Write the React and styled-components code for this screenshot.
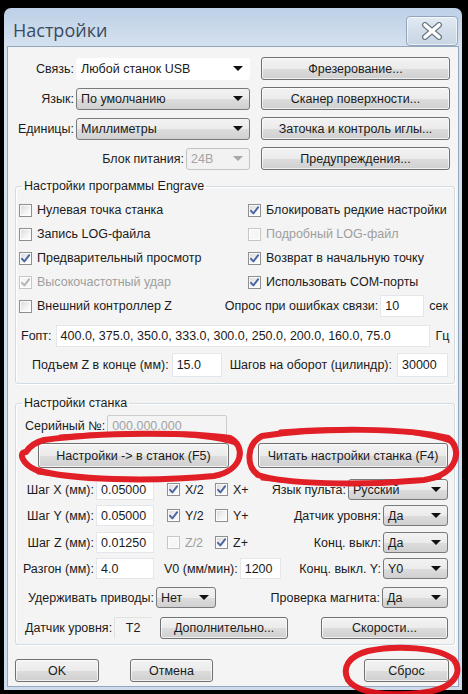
import React from "react";
import styled, { createGlobalStyle } from "styled-components";

const GlobalStyle = createGlobalStyle`
  html, body {
    margin: 0;
    padding: 0;
    background: #000;
  }
  body {
    font-family: "Liberation Sans", Arial, sans-serif;
    font-size: 12.5px;
    color: #1b1b1b;
  }
  * {
    box-sizing: border-box;
  }
`;

const Screen = styled.div`
  position: relative;
  width: 468px;
  height: 694px;
  overflow: hidden;
  background: #000;
  padding: 8px 6px 0 4px;
`;

const Window = styled.div`
  height: 682px;
  border-radius: 7px 7px 0 0;
  background: linear-gradient(#bdd0e7, #d4e1ef 38px, #cddbea);
  padding: 0 3px 3px 3px;
  display: flex;
  flex-direction: column;
`;

const TitleBar = styled.div`
  height: 38px;
  display: flex;
  align-items: center;
  justify-content: space-between;
  padding: 0 0 0 6px;
`;

const Title = styled.div`
  font-family: "Open Sans", "Noto Sans", sans-serif;
  font-size: 18px;
  color: #3b4b5e;
  padding-top: 6px;
`;

const CloseButton = styled.div`
  width: 52px;
  height: 30px;
  margin-top: 8px;
  margin-right: 1px;
  border: 1px solid #94a6bd;
  border-radius: 4px;
  background: linear-gradient(#e3ebf4, #d3deea 50%, #c8d5e4);
  box-shadow: inset 0 0 0 1px rgba(255, 255, 255, 0.6);
  display: flex;
  align-items: center;
  justify-content: center;
`;

const Client = styled.div`
  flex: 1;
  background: #f4f4f4;
  border: 1px solid #94a7bf;
  display: flex;
  flex-direction: column;
`;

const TopSection = styled.div`
  display: grid;
  grid-template-columns: 1fr 189px;
  column-gap: 11px;
  row-gap: 7px;
  padding: 10px 8px 0 6px;
`;

const FieldRow = styled.div`
  display: flex;
  align-items: center;
  justify-content: flex-end;
  gap: 2px;
  height: 23px;
`;

const Label = styled.span`
  white-space: nowrap;
  color: ${(p) => (p.$disabled ? "#9a9a9a" : "#1b1b1b")};
  width: ${(p) => (p.$w ? `${p.$w}px` : "auto")};
  text-align: ${(p) => p.$align || "left"};
  flex-shrink: 0;
`;

const ComboBox = styled.div`
  width: ${(p) => p.$w}px;
  height: ${(p) => p.$h || 22}px;
  flex-shrink: 0;
  display: flex;
  align-items: center;
  justify-content: space-between;
  padding: 0 6px 0 4px;
  border-radius: 3px;
  color: ${(p) => (p.$disabled ? "#a3a3a3" : "#1b1b1b")};
  border: 1px solid ${(p) => (p.$flat ? "transparent" : p.$disabled ? "#c4c4c4" : "#7a7a7a")};
  background: ${(p) =>
    p.$flat
      ? "#ffffff"
      : p.$disabled
      ? "#f2f2f2"
      : "linear-gradient(#f3f3f3, #ebebeb 50%, #dddddd 51%, #d0d0d0)"};
`;

const Arrow = styled.span`
  width: 0;
  height: 0;
  border-left: 5px solid transparent;
  border-right: 5px solid transparent;
  border-top: 5px solid ${(p) => (p.$disabled ? "#a8a8a8" : "#111")};
`;

const Button = styled.div`
  width: ${(p) => (p.$w ? `${p.$w}px` : "auto")};
  height: ${(p) => p.$h || 23}px;
  flex-shrink: 0;
  display: flex;
  align-items: center;
  justify-content: center;
  border: 1px solid #707070;
  border-radius: 3px;
  background: linear-gradient(#f3f3f3, #ebebeb 50%, #dddddd 51%, #cfcfcf);
  box-shadow: inset 0 0 0 1px rgba(255, 255, 255, 0.7);
  white-space: nowrap;
`;

const GroupBox = styled.fieldset`
  margin: ${(p) => p.$top}px 3px 0 7px;
  padding: ${(p) => p.$pad};
  border: 1px solid #d3dbe2;
  border-radius: 3px;
  box-shadow: inset 1px 1px 0 #fff, 1px 1px 0 #fff;
  min-width: 0;
`;

const Legend = styled.legend`
  margin-left: 6px;
  padding: 0 2px;
  line-height: 14px;
`;

const CheckGrid = styled.div`
  display: grid;
  grid-template-columns: 229px 1fr;
  grid-auto-rows: 24px;
  padding-left: 3px;
`;

const CheckItem = styled.div`
  display: flex;
  align-items: center;
  gap: 5px;
  white-space: nowrap;
  color: ${(p) => (p.$disabled ? "#9e9e9e" : "#1b1b1b")};
  margin-left: ${(p) => p.$ml || 0}px;
  width: ${(p) => (p.$w ? `${p.$w}px` : "auto")};
  flex-shrink: 0;
`;

const Box = styled.span`
  width: 13px;
  height: 13px;
  flex-shrink: 0;
  border: 1px solid ${(p) => (p.$disabled ? "#c6c6c6" : "#8e8f8f")};
  background: ${(p) =>
    p.$disabled ? "#f6f6f6" : "linear-gradient(135deg, #d8d8d8, #f4f4f4 60%, #ffffff)"};
  box-shadow: inset 0 0 0 1px rgba(255, 255, 255, 0.8);
  display: flex;
  align-items: center;
  justify-content: center;
`;

const Row = styled.div`
  display: flex;
  align-items: center;
  height: ${(p) => p.$h || 22}px;
  margin-top: ${(p) => p.$mt || 0}px;
  padding-left: ${(p) => p.$pl || 0}px;
  gap: ${(p) => p.$gap || 0}px;
`;

const RightCell = styled.div`
  flex: 1;
  display: flex;
  align-items: center;
  justify-content: flex-end;
  gap: 2px;
  padding-right: ${(p) => p.$pr || 0}px;
`;

const TextBox = styled.div`
  width: ${(p) => p.$w}px;
  height: ${(p) => p.$h || 22}px;
  flex-shrink: 0;
  display: flex;
  align-items: center;
  justify-content: ${(p) => (p.$center ? "center" : "flex-start")};
  padding-left: ${(p) => (p.$center ? 0 : 4)}px;
  background: ${(p) => (p.$disabled || p.$plain ? "#f4f4f4" : "#ffffff")};
  color: ${(p) => (p.$disabled ? "#a3a3a3" : "#1b1b1b")};
  border: 1px solid;
  border-color: ${(p) =>
    p.$plain ? "#e2e2e2 #f4f4f4 #f4f4f4 #e2e2e2" : p.$disabled ? "#c9ccd0" : "#e3e6ea"};
  border-radius: ${(p) => (p.$disabled ? 2 : 0)}px;
  white-space: nowrap;
`;

const Footer = styled.div`
  display: flex;
  align-items: center;
  padding: 14px 9px 0 7px;
  gap: 31px;
`;

const Marks = styled.svg`
  position: absolute;
  left: 0;
  top: 0;
  pointer-events: none;
`;

function Combo({ w, value, flat, disabled, h }) {
  return (
    <ComboBox $w={w} $flat={flat} $disabled={disabled} $h={h}>
      <span>{value}</span>
      <Arrow $disabled={disabled} />
    </ComboBox>
  );
}

function Check({ label, checked, disabled, w, ml }) {
  return (
    <CheckItem $disabled={disabled} $w={w} $ml={ml}>
      <Box $disabled={disabled}>
        {checked && (
          <svg width="11" height="11" viewBox="0 0 11 11">
            <path
              d="M2 5.8 L4.4 8.4 L9.2 2.2"
              fill="none"
              stroke={disabled ? "#b4b4b4" : "#4a64a0"}
              strokeWidth="1.9"
              strokeLinecap="round"
              strokeLinejoin="round"
            />
          </svg>
        )}
      </Box>
      <span>{label}</span>
    </CheckItem>
  );
}

function CloseIcon() {
  return (
    <svg width="24" height="18" viewBox="0 0 24 18">
      <path
        d="M5 3 L19 15 M19 3 L5 15"
        stroke="#6d7885"
        strokeWidth="6"
        strokeLinecap="round"
      />
      <path
        d="M5 3 L19 15 M19 3 L5 15"
        stroke="#ffffff"
        strokeWidth="3.6"
        strokeLinecap="round"
      />
    </svg>
  );
}

const mainChecks = [
  { label: "Нулевая точка станка" },
  { label: "Блокировать редкие настройки", checked: true },
  { label: "Запись LOG-файла" },
  { label: "Подробный LOG-файл", disabled: true },
  { label: "Предварительный просмотр", checked: true },
  { label: "Возврат в начальную точку", checked: true },
  { label: "Высокочастотный удар", checked: true, disabled: true },
  { label: "Использовать COM-порты", checked: true },
];

export default function App() {
  return (
    <>
      <GlobalStyle />
      <Screen>
        <Window>
          <TitleBar>
            <Title>Настройки</Title>
            <CloseButton>
              <CloseIcon />
            </CloseButton>
          </TitleBar>
          <Client>
            <TopSection>
              <FieldRow>
                <Label>Связь:</Label>
                <Combo w={174} value="Любой станок USB" flat />
              </FieldRow>
              <Button>Фрезерование...</Button>
              <FieldRow>
                <Label>Язык:</Label>
                <Combo w={174} value="По умолчанию" />
              </FieldRow>
              <Button>Сканер поверхности...</Button>
              <FieldRow>
                <Label>Единицы:</Label>
                <Combo w={174} value="Миллиметры" />
              </FieldRow>
              <Button>Заточка и контроль иглы...</Button>
              <FieldRow>
                <Label>Блок питания:</Label>
                <Combo w={64} value="24В" disabled />
              </FieldRow>
              <Button>Предупреждения...</Button>
            </TopSection>

            <GroupBox $top={9} $pad="5px 6px 6px 0">
              <Legend>Настройки программы Engrave</Legend>
              <CheckGrid>
                {mainChecks.map((c) => (
                  <Check key={c.label} {...c} />
                ))}
              </CheckGrid>
              <Row $h={24} $pl={3}>
                <Check label="Внешний контроллер Z" />
                <RightCell>
                  <Label>Опрос при ошибках связи:</Label>
                  <TextBox $w={44}>10</TextBox>
                  <Label style={{ marginLeft: 3 }}>сек</Label>
                </RightCell>
              </Row>
              <Row $h={22} $mt={7} $pl={5} $gap={4}>
                <Label>Fопт:</Label>
                <TextBox $w={374}>
                  400.0, 375.0, 350.0, 333.0, 300.0, 250.0, 200.0, 160.0, 75.0
                </TextBox>
                <Label style={{ marginLeft: 2 }}>Гц</Label>
              </Row>
              <Row $h={24} $mt={6} $pl={16}>
                <Label>Подъем Z в конце (мм):</Label>
                <TextBox $w={50} $h={24} style={{ marginLeft: 3 }}>
                  15.0
                </TextBox>
                <RightCell>
                  <Label>Шагов на оборот (цилиндр):</Label>
                  <TextBox $w={51} $h={24} style={{ marginLeft: 3 }}>
                    30000
                  </TextBox>
                </RightCell>
              </Row>
            </GroupBox>

            <GroupBox $top={12} $pad="4px 6px 5px 0">
              <Legend>Настройки станка</Legend>
              <Row $h={24} $pl={9} $gap={2}>
                <Label>Серийный №:</Label>
                <TextBox $w={120} $disabled>
                  000.000.000
                </TextBox>
              </Row>
              <Row $h={25} $mt={5} $pl={22}>
                <Button $w={191} $h={25}>
                  Настройки -&gt; в станок (F5)
                </Button>
                <RightCell>
                  <Button $w={190} $h={25}>
                    Читать настройки станка (F4)
                  </Button>
                </RightCell>
              </Row>

              <Row $h={21} $mt={11} $gap={2}>
                <Label $w={78} $align="right">Шаг X (мм):</Label>
                <TextBox $w={58} $h={21}>0.05000</TextBox>
                <Check label="X/2" checked w={46} ml={11} />
                <Check label="X+" checked />
                <RightCell>
                  <Label>Язык пульта:</Label>
                  <Combo w={100} h={21} value="Русский" />
                </RightCell>
              </Row>
              <Row $h={21} $mt={5} $gap={2}>
                <Label $w={78} $align="right">Шаг Y (мм):</Label>
                <TextBox $w={58} $h={21}>0.05000</TextBox>
                <Check label="Y/2" checked w={46} ml={11} />
                <Check label="Y+" />
                <RightCell>
                  <Label>Датчик уровня:</Label>
                  <Combo w={65} h={21} value="Да" />
                </RightCell>
              </Row>
              <Row $h={21} $mt={6} $gap={2}>
                <Label $w={78} $align="right">Шаг Z (мм):</Label>
                <TextBox $w={58} $h={21}>0.01250</TextBox>
                <Check label="Z/2" disabled w={46} ml={11} />
                <Check label="Z+" checked />
                <RightCell>
                  <Label>Конц. выкл:</Label>
                  <Combo w={65} h={21} value="Да" />
                </RightCell>
              </Row>
              <Row $h={21} $mt={5} $gap={2}>
                <Label $w={78} $align="right">Разгон (мм):</Label>
                <TextBox $w={58} $h={21}>4.0</TextBox>
                <Label style={{ marginLeft: 8 }}>V0 (мм/мин):</Label>
                <TextBox $w={41} $h={21}>1200</TextBox>
                <RightCell>
                  <Label>Конц. выкл. Y:</Label>
                  <Combo w={65} h={21} value="Y0" />
                </RightCell>
              </Row>
              <Row $h={21} $mt={8} $pl={12} $gap={2}>
                <Label>Удерживать приводы:</Label>
                <Combo w={60} h={21} value="Нет" />
                <RightCell>
                  <Label>Проверка магнита:</Label>
                  <Combo w={66} h={21} value="Да" />
                </RightCell>
              </Row>
              <Row $h={22} $mt={9} $pl={9} $gap={2}>
                <Label>Датчик уровня:</Label>
                <TextBox $w={38} $h={22} $plain $center>
                  T2
                </TextBox>
                <Button $w={128} $h={22} style={{ marginLeft: 6 }}>
                  Дополнительно...
                </Button>
                <RightCell>
                  <Button $w={127} $h={22}>
                    Скорости...
                  </Button>
                </RightCell>
              </Row>
            </GroupBox>

            <Footer>
              <Button $w={84}>OK</Button>
              <Button $w={83}>Отмена</Button>
              <Button $w={85} style={{ marginLeft: "auto" }}>
                Сброс
              </Button>
            </Footer>
          </Client>
        </Window>

        <Marks width="468" height="694" viewBox="0 0 468 694">
          <g fill="none" stroke="#e0141c" strokeLinecap="round" strokeLinejoin="round" opacity="0.95">
            <path
              strokeWidth="6"
              d="M44 440 C100 432 190 432 230 438 C246 446 244 470 214 476 C150 482 70 480 36 470 C22 464 18 452 26 452 C30 446 36 442 44 440 Z"
            />
            <path
              strokeWidth="3"
              d="M60 436 C120 431 200 433 236 444 M38 473 C90 480 170 481 220 476"
            />
            <path
              strokeWidth="6"
              d="M262 436 C320 427 410 428 448 438 C462 448 460 474 424 480 C360 486 284 484 258 475 C246 466 246 444 262 436 Z"
            />
            <path
              strokeWidth="3"
              d="M280 431 C340 426 420 429 455 444 M262 479 C320 486 400 485 440 478"
            />
            <path
              strokeWidth="6"
              d="M368 651 C396 645 440 647 454 660 C464 674 452 690 420 693 C390 696 358 694 348 680 C342 668 348 656 368 651 Z"
            />
            <path strokeWidth="3" d="M380 648 C410 644 445 650 458 664" />
          </g>
        </Marks>
      </Screen>
    </>
  );
}
